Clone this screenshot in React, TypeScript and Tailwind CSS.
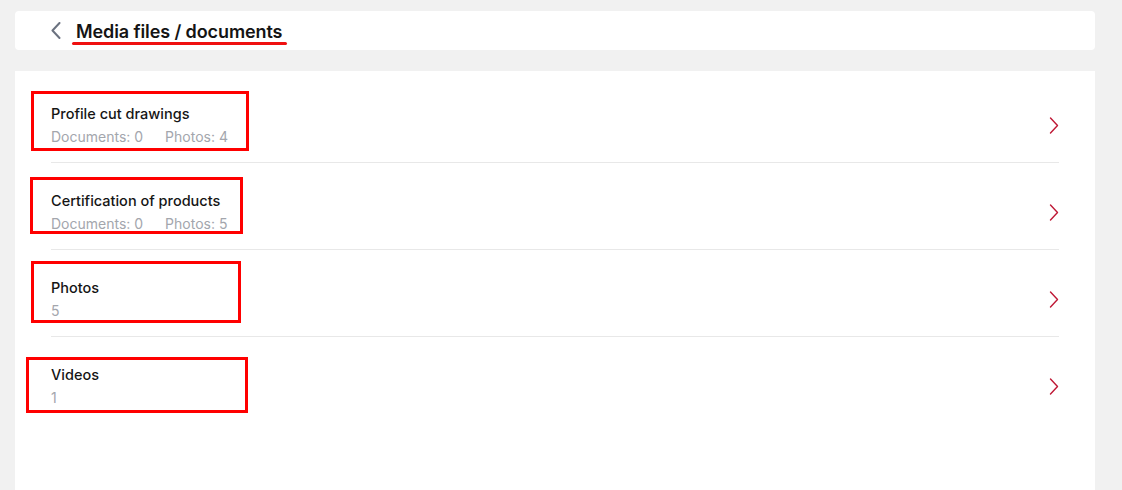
type Folder = {
  title: string
  counts: string[]
  box: string
}

const folders: Folder[] = [
  {
    title: 'Profile cut drawings',
    counts: ['Documents: 0', 'Photos: 4'],
    box: 'left-[-20px] top-[-13px] w-[218px] h-[60px]',
  },
  {
    title: 'Certification of products',
    counts: ['Documents: 0', 'Photos: 5'],
    box: 'left-[-21px] top-[-14px] w-[213px] h-[57px]',
  },
  {
    title: 'Photos',
    counts: ['5'],
    box: 'left-[-20px] top-[-17px] w-[210px] h-[62px]',
  },
  {
    title: 'Videos',
    counts: ['1'],
    box: 'left-[-25px] top-[-8px] w-[222px] h-[56px]',
  },
]

function Chevron({ dir, className }: { dir: 'left' | 'right'; className?: string }) {
  return (
    <svg width="10" height="17" viewBox="0 0 10 17" fill="none" className={className}>
      <polyline
        points={dir === 'left' ? '8.5,1 1.5,8.5 8.5,16' : '1.5,1 8.5,8.5 1.5,16'}
        stroke="currentColor"
        strokeWidth={dir === 'left' ? 2 : 1.4}
        strokeLinecap="round"
        strokeLinejoin="round"
      />
    </svg>
  )
}

export default function App() {
  return (
    <div className="min-h-[490px] bg-[#f1f1f1] pt-[11px] pl-[15px] pr-[27px] font-['Inter',sans-serif]">
      {/* Header */}
      <div className="flex h-[39px] items-center gap-[15px] rounded-[4px] bg-white pl-[36px]">
        <Chevron dir="left" className="text-[#6b7280]" />
        <div className="relative pt-[2px]">
          <h1 className="text-[18px] font-semibold leading-none tracking-[-0.1px] text-[#141414]">
            Media files / documents
          </h1>
          <div className="absolute left-[-4px] right-[-5px] top-[21px] h-[3px] rounded-full bg-[#ef1010]" />
        </div>
      </div>

      {/* Folder list */}
      <div className="mt-[21px] min-h-[419px] bg-white px-9 pt-[5px]">
        {folders.map((f, i) => (
          <div
            key={f.title}
            className={
              i < folders.length - 1
                ? 'flex items-center border-b border-[#e8e8e8] pt-[28px] pb-[15px]'
                : 'flex items-center pt-[28px] pb-[15px]'
            }
          >
            <div className="relative flex-1">
              <div className="text-[14.5px] font-medium leading-[20px] text-[#151515]">
                {f.title}
              </div>
              <div className="mt-[3px] flex gap-[22px] text-[14px] leading-[20px] text-[#a3a6ad]">
                {f.counts.map((c) => (
                  <span key={c}>{c}</span>
                ))}
              </div>
              {/* annotation box */}
              <div
                className={`pointer-events-none absolute border-[3px] border-[#f00] ${f.box}`}
              />
            </div>
            <Chevron dir="right" className="text-[#bf1835]" />
          </div>
        ))}
      </div>
    </div>
  )
}
